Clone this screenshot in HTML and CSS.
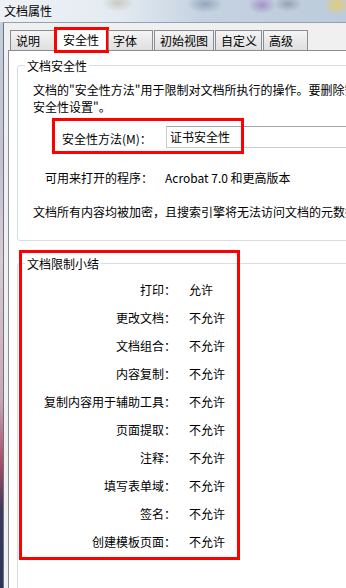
FILE: index.html
```html
<!DOCTYPE html>
<html lang="zh-CN">
<head>
<meta charset="utf-8">
<title>文档属性</title>
<link rel="stylesheet" href="styles.css">
</head>
<body>
<div class="titlebar"><span class="title">文档属性</span></div>
<div class="client">
  <div class="tabs">
    <div class="tab tab-a">说明</div>
    <div class="tab tab-sel">安全性</div>
    <div class="tab tab-c">字体</div>
    <div class="tab tab-d">初始视图</div>
    <div class="tab tab-e">自定义</div>
    <div class="tab tab-f">高级</div>
  </div>
  <div class="panel">
    <fieldset class="group g1">
      <legend>文档安全性</legend>
      <p class="desc">文档的"安全性方法"用于限制对文档所执行的操作。要删除安全性限制，请将"安全性方法"设置为"无<br>安全性设置"。</p>
      <div class="method">
        <span class="method-label">安全性方法(M)：</span>
        <div class="combo">证书安全性</div>
      </div>
      <div class="apps">
        <span class="apps-label">可用来打开的程序：</span>
        <span>Acrobat 7.0 和更高版本</span>
      </div>
      <p class="enc">文档所有内容均被加密，且搜索引擎将无法访问文档的元数据。</p>
    </fieldset>
    <fieldset class="group g2">
      <legend>文档限制小结</legend>
      <div class="rows">
        <span class="k">打印：</span><span class="v">允许</span>
        <span class="k">更改文档：</span><span class="v">不允许</span>
        <span class="k">文档组合：</span><span class="v">不允许</span>
        <span class="k">内容复制：</span><span class="v">不允许</span>
        <span class="k">复制内容用于辅助工具：</span><span class="v">不允许</span>
        <span class="k">页面提取：</span><span class="v">不允许</span>
        <span class="k">注释：</span><span class="v">不允许</span>
        <span class="k">填写表单域：</span><span class="v">不允许</span>
        <span class="k">签名：</span><span class="v">不允许</span>
        <span class="k">创建模板页面：</span><span class="v">不允许</span>
      </div>
    </fieldset>
  </div>
</div>
<div class="mark mark-1"></div>
<div class="mark mark-2"></div>
</body>
</html>
```
FILE: styles.css
```css
* { box-sizing: border-box; }
html, body { margin: 0; padding: 0; }
body {
  width: 346px;
  height: 588px;
  overflow: hidden;
  position: relative;
  font-family: "Noto Sans CJK SC", "Microsoft YaHei", sans-serif;
  font-size: 12px;
  line-height: 17px;
  color: #000;
  background: linear-gradient(to bottom, #c3cfdb 0px, #c6c0cb 160px, #d9c9d1 260px, #c9a6b4 400px, #a84a62 465px, #3d3a58 510px, #2b3552 588px);
}
.titlebar {
  height: 22px;
  padding-left: 4px;
  line-height: 22px;
  white-space: nowrap;
  background:
    radial-gradient(ellipse 16px 9px at 118px 3px, rgba(170,160,140,.45), transparent),
    radial-gradient(ellipse 18px 9px at 205px 4px, rgba(110,130,160,.55), transparent),
    radial-gradient(ellipse 14px 9px at 262px 5px, rgba(140,100,180,.55), transparent),
    radial-gradient(ellipse 14px 8px at 288px 4px, rgba(100,110,130,.45), transparent),
    radial-gradient(ellipse 14px 10px at 337px 5px, rgba(235,205,90,.8), transparent),
    linear-gradient(to right, #eef2f6 0px, #e3eaf1 120px, #c5d3e1 200px, #bccbdb 346px);
}
.client {
  margin-left: 3px;
  width: 440px;
  height: 566px;
  border-left: 1px solid #66768a;
  border-top: 1px solid #8fa2b6;
  background: #f0f0f0;
  padding-left: 4px;
}
.tabs {
  display: flex;
  align-items: flex-end;
  height: 26px;
  margin: 4px 0 -3px 2px;
  position: relative;
  z-index: 1;
}
.tab {
  height: 20px;
  margin-bottom: 3px;
  border: 1px solid #898c95;
  border-bottom: none;
  background: linear-gradient(to bottom, #f5f5f5, #e9e9e9 50%, #e0e0e0);
  padding-left: 5px;
  line-height: 19px;
  white-space: nowrap;
}
.tab-a { width: 45px; }
.tab-sel {
  width: 55px;
  height: 26px;
  margin-bottom: 0;
  margin-left: -1px;
  border: 3px solid #f00;
  background: #fff;
  padding-left: 6px;
  line-height: 20px;
}
.tab-c { width: 45px; margin-left: -1px; padding-left: 4px; }
.tab-d { width: 60px; margin-left: 1px; }
.tab-e { width: 47px; margin-left: 1px; }
.tab-f { width: 45px; margin-left: 1px; }
.panel {
  height: 540px;
  border-top: 1px solid #898c95;
  border-left: 1px solid #898c95;
  background: #fff;
  padding: 6px 0 0 8px;
}
.group {
  margin: 0;
  padding: 0;
  min-width: 0;
  border: 1px solid #d5dfe5;
  border-radius: 3px;
}
.group legend {
  margin-left: 7px;
  padding: 0 2px;
}
.g1 p { margin: 0; white-space: nowrap; }
.desc { margin: 7px 0 0 15px !important; }
.method {
  display: flex;
  align-items: center;
  margin: 11px 0 0 44px;
  white-space: nowrap;
}
.method-label { width: 104px; padding-top: 2px; }
.combo {
  flex: 1;
  height: 22px;
  border: 1px solid #c9cbd0;
  border-top-color: #a3a6ad;
  padding-left: 3px;
  line-height: 20px;
}
.apps {
  display: flex;
  margin: 21px 0 0 27px;
  white-space: nowrap;
}
.apps-label { width: 120px; }
.enc { margin: 17px 0 20px 15px !important; }
.g2 { margin-top: 14px; padding-bottom: 80px; }
.rows {
  display: grid;
  grid-template-columns: 158px auto;
  column-gap: 13px;
  grid-auto-rows: 28px;
  align-items: center;
  padding-top: 3px;
  white-space: nowrap;
}
.k { text-align: right; }
.mark {
  position: absolute;
  border: 3px solid #f00;
  pointer-events: none;
}
.mark-1 { left: 52px; top: 118px; width: 192px; height: 36px; }
.mark-2 { left: 19px; top: 250px; width: 221px; height: 310px; }
```
